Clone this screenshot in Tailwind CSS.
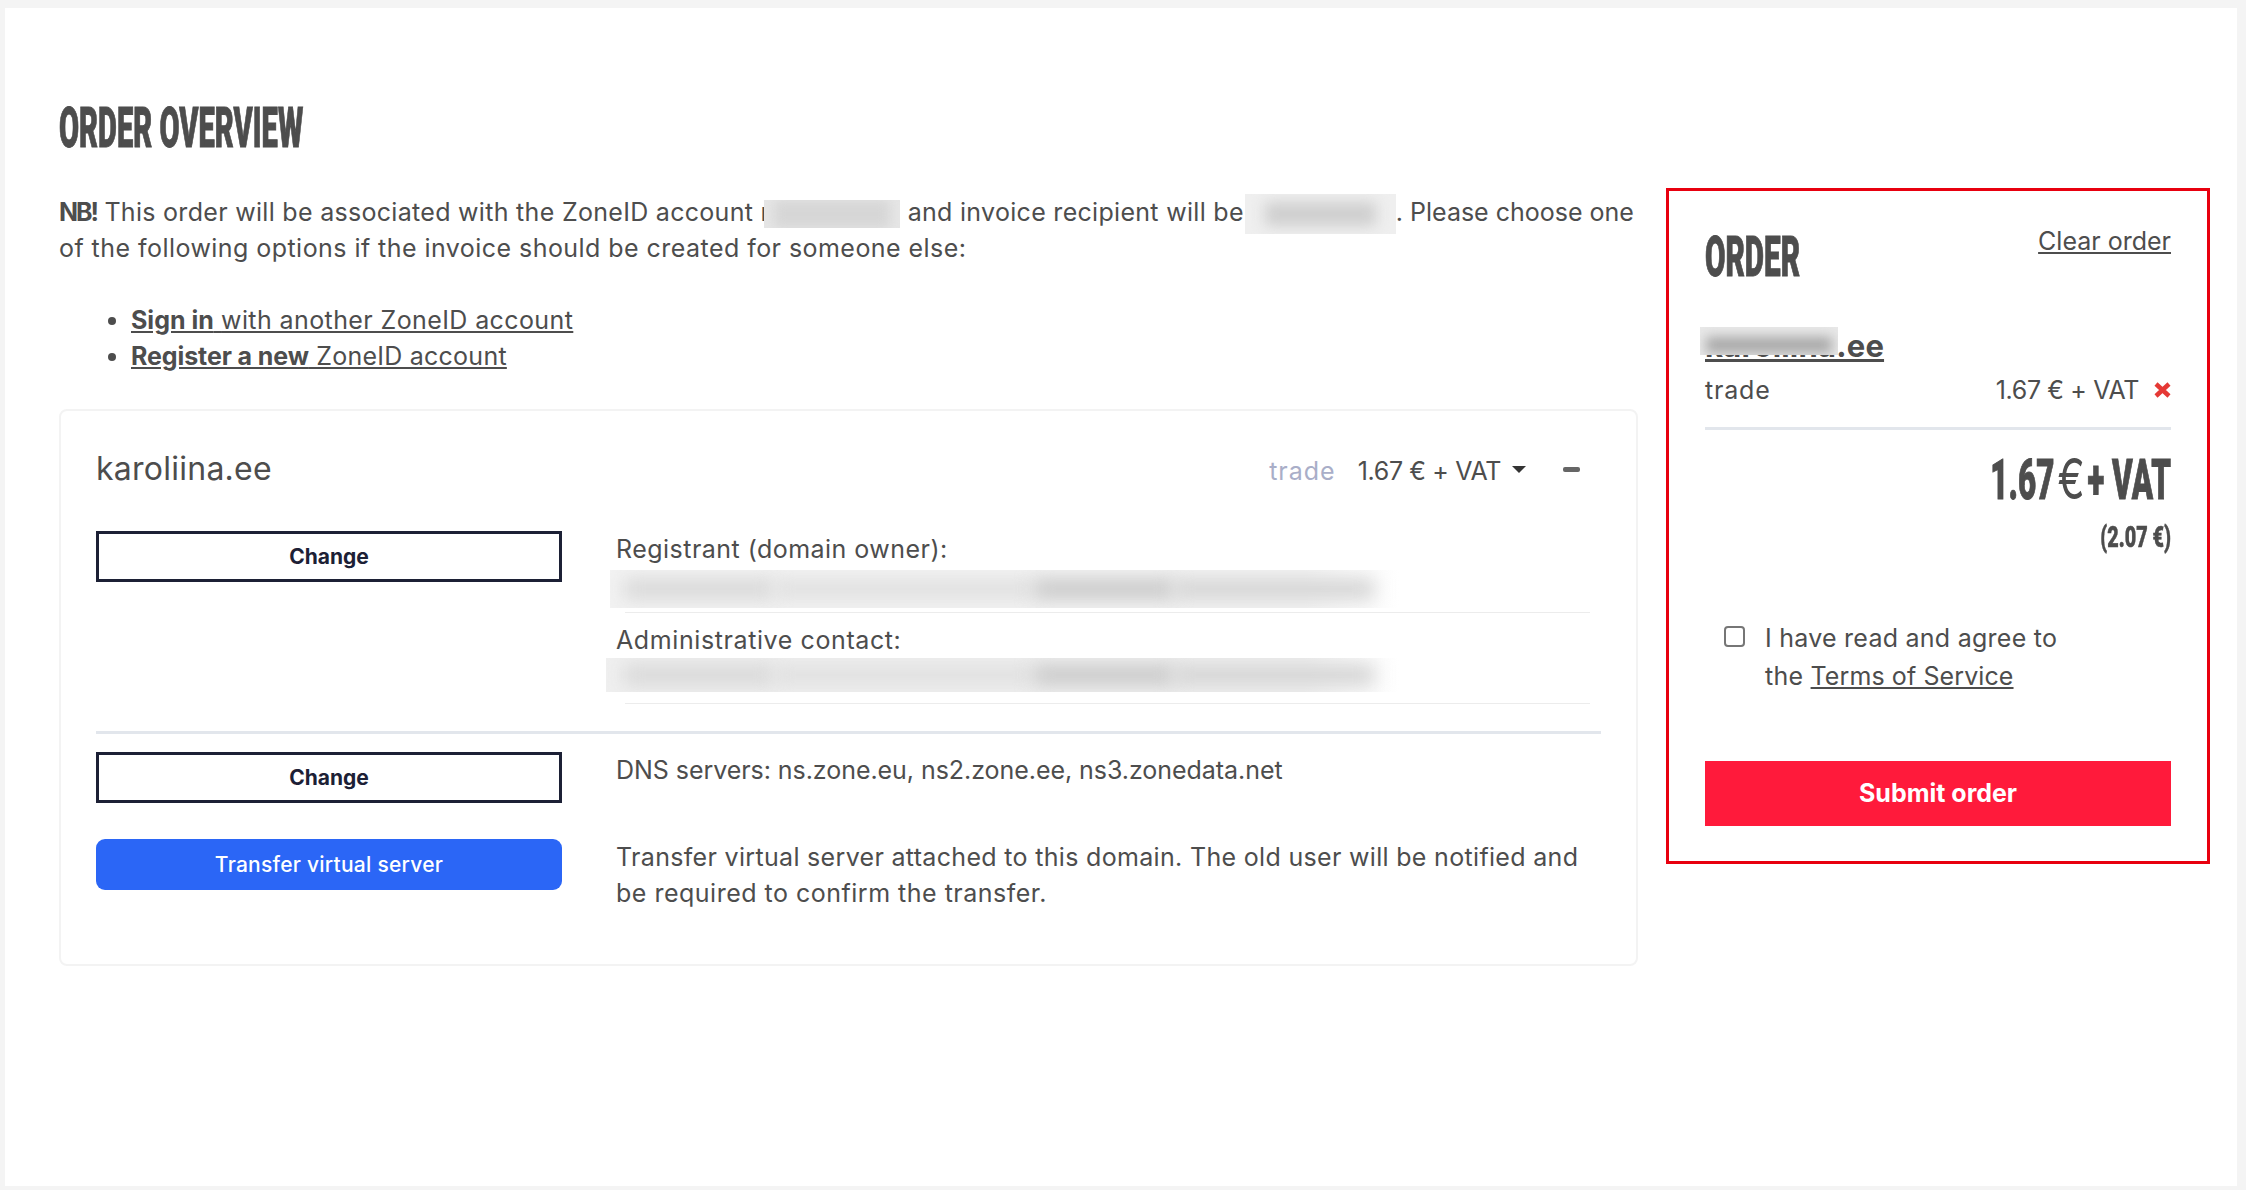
<!DOCTYPE html>
<html lang="en">
<head>
<meta charset="UTF-8">
<title>Order overview</title>
<script src="https://cdn.jsdelivr.net/npm/@tailwindcss/browser@4"></script>
</head>
<body class="bg-[#f4f4f4] font-['Inter',sans-serif] text-[#4d4d4d]">
<div class="pt-[8px] pl-[5px] pr-[9px] pb-[4px] h-[1190px]">
  <div class="h-full bg-white flex pl-[54px]">

    <!-- left column -->
    <div class="w-[1579px] shrink-0">
      <h1 class="mt-[92px] h-[56px] font-['Roboto',sans-serif] font-black text-[56px] leading-[56px] whitespace-nowrap origin-left scale-x-[0.52] [-webkit-text-stroke:1px_#4d4d4d]">ORDER OVERVIEW</h1>

      <p class="mt-[38px] text-[25px] leading-[36px] tracking-[0.3px] whitespace-nowrap">
        <b class="tracking-[-2px]">NB!</b> This order will be associated with the ZoneID account <span class="-mr-[6px]">r</span><span class="inline-block align-middle w-[136px] h-[28px] -my-[4px] overflow-hidden bg-[#e6e6e6]"><span class="block h-full mx-[10px] bg-[#d6d6d6] blur-[6px]"></span></span> and invoice recipient will be<span class="inline-block align-middle w-[151px] h-[40px] -my-[6px] ml-[1px] overflow-hidden bg-[#efefef]"><span class="block h-[24px] mt-[8px] mx-[20px] bg-[#cfcfcf] blur-[7px]"></span></span><span class="tracking-[0px]">. Please choose one</span><br>
        <span class="tracking-[0.45px]">of the following options if the invoice should be created for someone else:</span>
      </p>

      <ul class="mt-[36px] ml-[72px] text-[25px] leading-[36px] tracking-[0.25px] list-disc">
        <li><a href="#" class="underline"><b class="tracking-[0px]">Sign in</b> <span class="tracking-[0.4px]">with another ZoneID account</span></a></li>
        <li><a href="#" class="underline"><b class="tracking-[-0.1px]">Register a new</b> ZoneID account</a></li>
      </ul>

      <section class="mt-[35px] h-[557px] border-2 border-[#f3f3f3] rounded-[8px] pt-[40px] pl-[35px]">
        <div class="flex items-baseline w-[1484px] h-[36px]">
          <span class="text-[32px] leading-[36px] tracking-[0.25px]">karoliina.ee</span>
          <span class="ml-auto text-[25px] leading-[36px] tracking-[1px] text-[#a9aec8]">trade</span>
          <span class="ml-[22px] text-[25px] leading-[36px] tracking-[-0.35px]">1.67 € + VAT</span>
          <span class="ml-[11px] w-0 h-0 self-center border-x-[7px] border-x-transparent border-t-[7px] border-t-[#333]"></span>
          <span class="ml-[37px] w-[17px] h-[5px] self-center rounded-[2px] bg-[#666]"></span>
        </div>

        <div class="mt-[44px] grid grid-cols-[466px_1fr] gap-x-[54px]">
          <button class="h-[51px] border-[3px] border-[#1c2035] bg-white text-[21px] font-bold text-[#1c2035]">Change</button>
          <div class="row-span-2">
            <div class="text-[25px] leading-[36px] tracking-[0.47px]">Registrant (domain owner):</div>
            <div class="mt-[3px] -ml-[6px] w-[789px] h-[38px] overflow-hidden flex px-[14px] py-[9px] bg-[linear-gradient(90deg,#f2f2f2_0%,#f2f2f2_88%,#ffffff_100%)]">
              <span class="w-[150px] bg-[#d8d8d8] blur-[9px]"></span>
              <span class="w-[260px] bg-[#e0e0e0] blur-[9px]"></span>
              <span class="w-[140px] bg-[#c9c9c9] blur-[9px]"></span>
              <span class="w-[200px] bg-[#d4d4d4] blur-[9px]"></span>
            </div>
            <div class="mt-[4px] ml-[9px] w-[965px] h-[1px] bg-[#ececec]"></div>
            <div class="mt-[9px] text-[25px] leading-[36px] tracking-[0.6px]">Administrative contact:</div>
            <div class="-ml-[10px] w-[793px] h-[34px] overflow-hidden flex px-[18px] py-[7px] bg-[linear-gradient(90deg,#efefef_0%,#efefef_88%,#ffffff_100%)]">
              <span class="w-[150px] bg-[#d8d8d8] blur-[9px]"></span>
              <span class="w-[260px] bg-[#e0e0e0] blur-[9px]"></span>
              <span class="w-[140px] bg-[#c9c9c9] blur-[9px]"></span>
              <span class="w-[200px] bg-[#d4d4d4] blur-[9px]"></span>
            </div>
            <div class="mt-[11px] ml-[9px] w-[965px] h-[1px] bg-[#ececec]"></div>
          </div>
        </div>

        <div class="mt-[27px] w-[1505px] h-[3px] bg-[#e2e6ec]"></div>

        <div class="mt-[18px] grid grid-cols-[466px_1fr] gap-x-[54px] gap-y-[36px]">
          <button class="h-[51px] border-[3px] border-[#1c2035] bg-white text-[21px] font-bold text-[#1c2035]">Change</button>
          <div class="text-[25px] leading-[36px] tracking-[-0.05px]">DNS servers: ns.zone.eu, ns2.zone.ee, ns3.zonedata.net</div>
          <button class="h-[51px] rounded-[9px] bg-[#2b66f6] text-[21px] tracking-[0.25px] font-medium text-white">Transfer virtual server</button>
          <div class="text-[25px] leading-[36px] whitespace-nowrap">
            <span class="block tracking-[0.32px]">Transfer virtual server attached to this domain. The old user will be notified and</span>
            <span class="block tracking-[0.5px]">be required to confirm the transfer.</span>
          </div>
        </div>
      </section>
    </div>

    <!-- order box -->
    <aside class="ml-[28px] mt-[180px] w-[544px] h-[676px] border-[3px] border-[#e8000f] px-[36px] pt-[32px]">
      <div class="flex justify-between items-start">
        <h2 class="mt-[6px] font-['Roboto',sans-serif] font-black text-[56px] leading-[56px] origin-left scale-x-[0.53] [-webkit-text-stroke:1px_#4d4d4d]">ORDER</h2>
        <a href="#" class="text-[25px] leading-[36px] underline">Clear order</a>
      </div>

      <div class="relative mt-[39px] h-[44px]">
        <a href="#" class="text-[31px] leading-[44px] tracking-[0.2px] font-bold underline">karoliina.ee</a>
        <div class="absolute -left-[5px] top-[3px] w-[138px] h-[28px] overflow-hidden bg-[#e8e8e8]"><div class="h-[16px] mt-[10px] mx-[6px] bg-[#a8a8a8] blur-[6px]"></div></div>
      </div>

      <div class="mt-[4px] flex items-baseline text-[25px] leading-[36px]">
        <span class="tracking-[0.8px]">trade</span>
        <span class="ml-auto tracking-[-0.35px]">1.67 € + VAT</span>
        <svg class="ml-[15px] w-[17px] h-[16px] self-center" viewBox="0 0 17 16"><path d="M2 2 L15 14 M15 2 L2 14" fill="none" stroke="#e53935" stroke-width="4.5"/></svg>
      </div>

      <div class="mt-[19px] h-[3px] bg-[#e2e6ec]"></div>

      <div class="mt-[21px] font-['Roboto',sans-serif] font-black text-[56px] leading-[56px] text-right whitespace-nowrap origin-right scale-x-[0.56] [-webkit-text-stroke:1px_#4d4d4d]">1.67<span class="inline-block mx-[11px] font-['Inter',sans-serif] font-normal scale-x-[1.3] [-webkit-text-stroke:0px]">€</span>+ VAT</div>
      <div class="mt-[14px] font-['Roboto',sans-serif] font-black text-[30px] leading-[30px] text-right whitespace-nowrap origin-right scale-x-[0.66] [-webkit-text-stroke:0.5px_#4d4d4d]">(2.07 €)</div>

      <label class="mt-[67px] ml-[19px] flex items-start">
        <span class="mt-[7px] w-[21px] h-[21px] shrink-0 rounded-[4px] border-2 border-[#767676] bg-white"></span>
        <span class="ml-[20px] text-[25px] leading-[38px] tracking-[0.25px]">I have read and agree to<br>the <a href="#" class="underline tracking-[0.1px]">Terms of Service</a></span>
      </label>

      <button class="mt-[66px] w-[466px] h-[65px] bg-[#ff1a3b] text-[25px] font-bold text-white">Submit order</button>
    </aside>
  </div>
</div>
</body>
</html>
